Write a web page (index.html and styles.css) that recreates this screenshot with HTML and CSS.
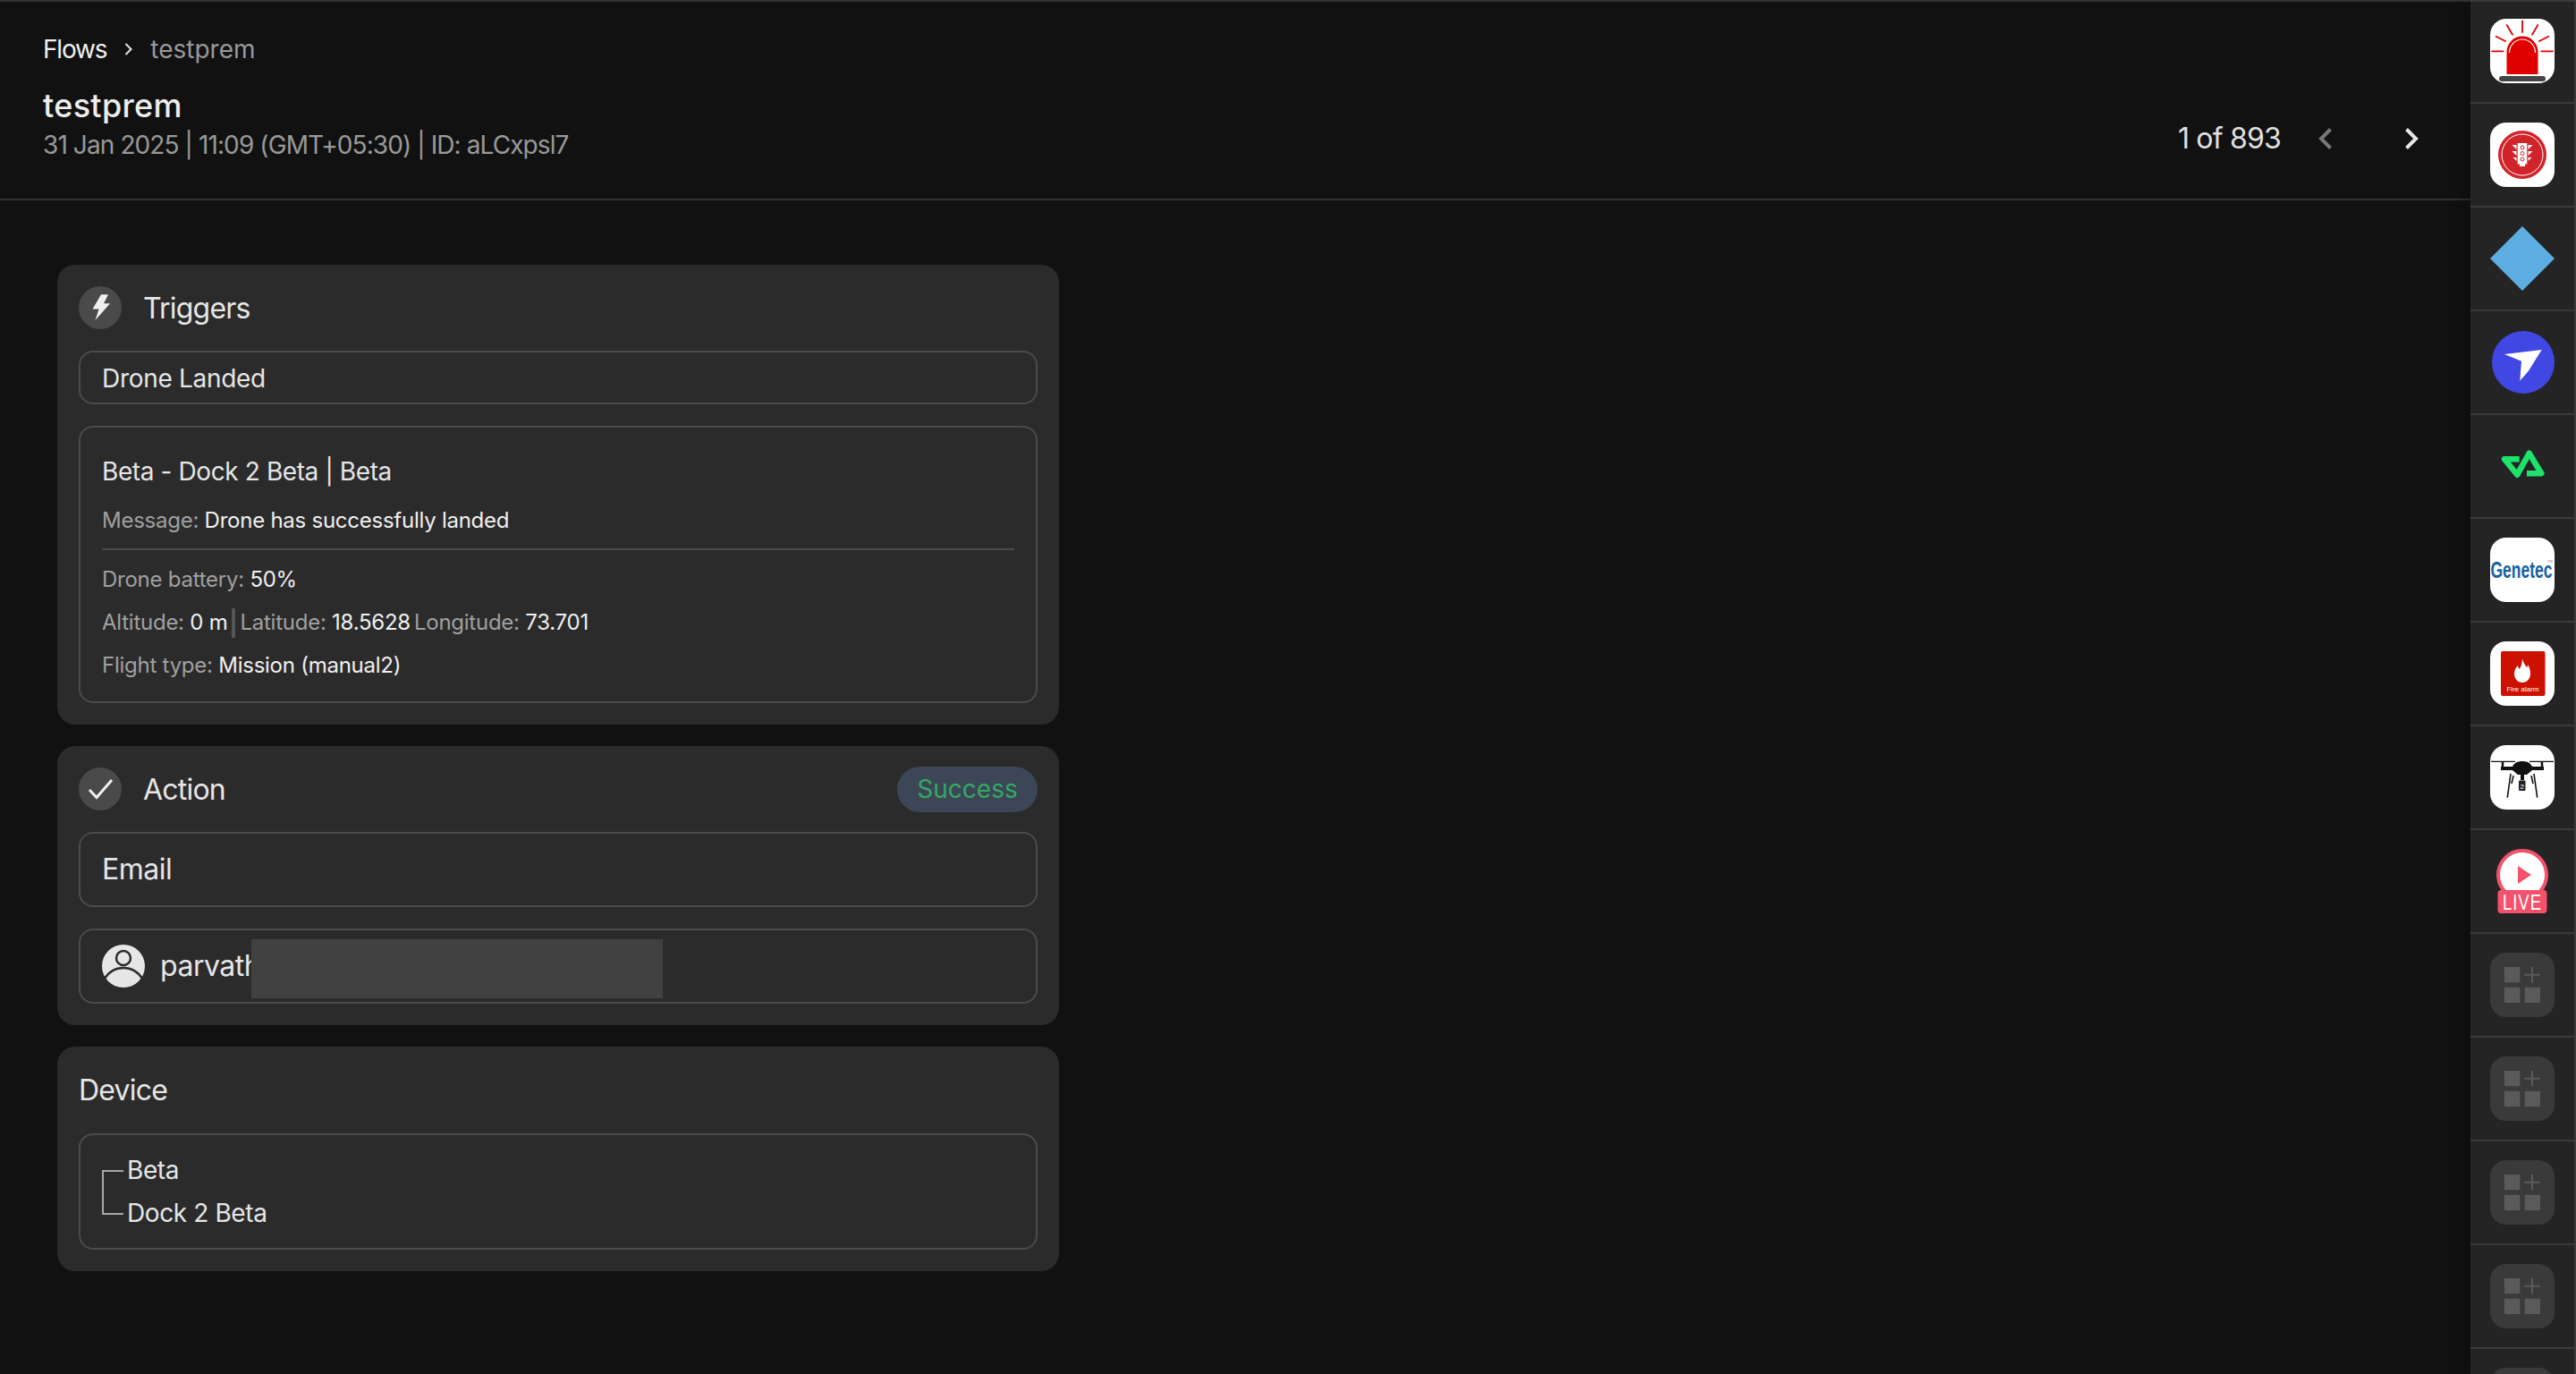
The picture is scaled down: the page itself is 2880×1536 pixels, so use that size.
FILE: index.html
```html
<!DOCTYPE html>
<html lang="en">
<head>
  <meta charset="UTF-8">
  <title>testprem</title>
  <link rel="stylesheet" href="styles.css">
</head>
<body>
  <div class="app">
    <main class="main">
      <header class="topbar">
        <nav class="crumbs">
          <span class="crumb-link">Flows</span>
          <svg class="crumb-sep" viewBox="0 0 10 16"><path d="M1.5 2l6 6-6 6"/></svg>
          <span class="crumb-here">testprem</span>
        </nav>
        <div class="title-row">
          <div>
            <h1 class="title">testprem</h1>
            <p class="subtitle">31 Jan 2025 | 11:09 (GMT+05:30) | ID: aLCxpsl7</p>
          </div>
          <div class="pager">
            <span class="pager-count">1 of 893</span>
            <svg class="pager-btn off" viewBox="0 0 16 26"><path d="M13.5 2.5L3 13l10.500 10.500"/></svg>
            <svg class="pager-btn" viewBox="0 0 16 26"><path d="M2.500 2.500L13 13 2.500 23.500"/></svg>
          </div>
        </div>
      </header>

      <div class="content">
        <section class="card">
          <div class="card-head">
            <span class="round-icon">
              <svg viewBox="0 0 48 48"><path class="fill" d="M25 9.300h8L28 19.300h7L18.500 38l4-12.500h-7z"/></svg>
            </span>
            <h2>Triggers</h2>
          </div>
          <div class="box box-small">Drone Landed</div>
          <div class="box box-detail">
            <div class="detail-title">Beta - Dock 2 Beta | Beta</div>
            <div class="row"><span class="key">Message:</span> Drone has successfully landed</div>
            <hr class="rule">
            <div class="row"><span class="key">Drone battery:</span> 50%</div>
            <div class="row pos">
              <span class="pos-item"><span class="key">Altitude:</span> 0 m</span>
              <i class="pipe"></i>
              <span class="pos-item"><span class="key">Latitude:</span> 18.5628</span>
              <span class="pos-item pos-last"><span class="key">Longitude:</span> 73.701</span>
            </div>
            <div class="row"><span class="key">Flight type:</span> Mission (manual2)</div>
          </div>
        </section>

        <section class="card">
          <div class="card-head">
            <span class="round-icon">
              <svg viewBox="0 0 48 48"><path class="line" d="M12 25l8 8.500L37 14"/></svg>
            </span>
            <h2>Action</h2>
            <span class="badge">Success</span>
          </div>
          <div class="box box-big">Email</div>
          <div class="box box-big person">
            <svg class="avatar" viewBox="0 0 48 48">
              <circle cx="24" cy="24" r="24" fill="#e6e6e6"/>
              <circle cx="24" cy="15" r="8" fill="none" stroke="#2b2b2b" stroke-width="2.500"/>
              <path d="M3 38c5-8 12-12 21-12s16 4 21 12" fill="none" stroke="#2b2b2b" stroke-width="2.500"/>
            </svg>
            <span>parvathi</span>
            <div class="redact"></div>
          </div>
        </section>

        <section class="card">
          <h2 class="device-head">Device</h2>
          <div class="box tree">
            <div class="tree-line"></div>
            <div>
              <div class="tree-row">Beta</div>
              <div class="tree-row">Dock 2 Beta</div>
            </div>
          </div>
        </section>
      </div>
    </main>

    <aside class="side">
      <a class="side-item">
        <svg class="app-icon" viewBox="0 0 72 72">
          <rect width="72" height="72" rx="18" fill="#fff"/>
          <path d="M18.500 62V37a17.500 17.500 0 0 1 35 0v25z" fill="#e10000"/>
          <path d="M21.500 38a14.500 15 0 0 1 29 0" fill="none" stroke="#fff" stroke-width="1.200"/>
          <rect x="10" y="64" width="52" height="6" rx="3" fill="#444"/>
          <path d="M36 2.500V15M18.700 7L25 17.700M53.300 7L47 17.700M6.700 19.700L17 25M65.300 19.700L55 25M2 36.300h12.700M70 36.300H57.300" stroke="#e10000" stroke-width="1.800" stroke-linecap="round"/>
        </svg>
      </a>
      <a class="side-item">
        <svg class="app-icon" viewBox="0 0 72 72">
          <rect width="72" height="72" rx="18" fill="#fff"/>
          <circle cx="36" cy="36" r="27" fill="#d1232a"/>
          <circle cx="36" cy="36" r="23" fill="none" stroke="#fff" stroke-width="1"/>
          <path d="M30.700 23h10.600v23.500H39V49h-6v-2.500h-2.300z" fill="#fff"/>
          <path d="M29.500 25h-5l5 5zM29.500 32h-5l5 5zM29.500 39h-4l4 4zM42.500 25h5l-5 5zM42.500 32h5l-5 5zM42.500 39h4l-4 4z" fill="#fff"/>
          <g fill="none" stroke="#d1232a" stroke-width="1">
            <circle cx="36" cy="28" r="2"/><circle cx="36" cy="34.500" r="2"/><circle cx="36" cy="41" r="2"/>
          </g>
        </svg>
      </a>
      <a class="side-item">
        <svg class="app-icon" viewBox="0 0 72 72"><path d="M36 0l36 36-36 36L0 36z" fill="#5dade2"/></svg>
      </a>
      <a class="side-item">
        <svg class="app-icon" viewBox="0 0 72 72">
          <circle cx="37" cy="36" r="35" fill="#4147e2"/>
          <path d="M16 27l41.700-5-15 24-9.400 10.700L35 34.700z" fill="#fff"/>
        </svg>
      </a>
      <a class="side-item">
        <svg class="app-icon" viewBox="0 0 72 72">
          <path d="M32.700 28.300H16L30.300 45.700 43.700 21.700 57.300 44.300H41" fill="none" stroke="#1ee36b" stroke-width="6.500" stroke-linejoin="round"/>
        </svg>
      </a>
      <a class="side-item">
        <svg class="app-icon" viewBox="0 0 72 72">
          <rect width="72" height="72" rx="18" fill="#fff"/>
          <text class="genetec" transform="translate(35 45) scale(1 1.45)" text-anchor="middle">Genetec</text>
          <text class="genetec-tm" x="64" y="28">TM</text>
        </svg>
      </a>
      <a class="side-item">
        <svg class="app-icon" viewBox="0 0 72 72">
          <rect width="72" height="72" rx="18" fill="#fff"/>
          <rect x="12" y="11" width="49.500" height="50" rx="2" fill="#cc1100"/>
          <path d="M36 19c1 5 3 7 5 10 1-1 1-2 1-3 2 3 3 6 3 10 0 6-4 10-9 10s-9-4-9-10c0-4 2-7 4-9 0 2 1 3 2 4 2-4 3-8 3-12z" fill="#fff"/>
          <text class="fire-text" x="36.500" y="56" text-anchor="middle">Fire alarm</text>
        </svg>
      </a>
      <a class="side-item">
        <svg class="app-icon" viewBox="0 0 72 72">
          <rect width="72" height="72" rx="18" fill="#fff"/>
          <path d="M1 18.300h27M44 18.300h27" stroke="#111" stroke-width="1.300"/>
          <path d="M14 18v6M58 18v6" stroke="#111" stroke-width="2.500"/>
          <path d="M12 24h13c2-4 5-6 11-6s9 2 11 6h13v4H47l-6 5H31l-6-5H12z" fill="#111"/>
          <path d="M23 32l-3.700 26.700M26 34l-2 9M49 32l3.700 26.700M46 34l2 9" stroke="#111" stroke-width="1.600" fill="none"/>
          <rect x="32" y="39.500" width="7.500" height="11.500" rx="1" fill="#222"/>
          <path d="M34 33h4v6h-4z" fill="#111"/>
          <text class="drone-text" x="35.700" y="48.500" text-anchor="middle">2</text>
        </svg>
      </a>
      <a class="side-item">
        <svg class="app-icon" viewBox="0 0 72 72">
          <circle cx="36" cy="29" r="27" fill="#fff" stroke="#f4516c" stroke-width="4"/>
          <path d="M31 19l15 10-15 10z" fill="#f4516c"/>
          <rect x="8.500" y="46" width="55" height="26" rx="4" fill="#f4516c"/>
          <text class="live-text" transform="translate(36 68) scale(1 1.3)" text-anchor="middle">LIVE</text>
        </svg>
      </a>
      <a class="side-item"><svg class="app-icon"><use href="#slot"/></svg></a>
      <a class="side-item"><svg class="app-icon"><use href="#slot"/></svg></a>
      <a class="side-item"><svg class="app-icon"><use href="#slot"/></svg></a>
      <a class="side-item"><svg class="app-icon"><use href="#slot"/></svg></a>
      <a class="side-item"><svg class="app-icon"><use href="#slot"/></svg></a>
    </aside>
  </div>

  <svg class="defs" width="0" height="0">
    <symbol id="slot" viewBox="0 0 72 72">
      <rect width="72" height="72" rx="18" fill="#3a3a3a"/>
      <path d="M16 16h17.300v17.300H16zM16 38.700h17.300V56H16zM38.700 38.700H56V56H38.700z" fill="#5a5a5a"/>
      <path d="M38.300 24.700h17.400M47 16v17.400" stroke="#5a5a5a" stroke-width="2"/>
    </symbol>
  </svg>
</body>
</html>
```

FILE: styles.css
```css
* { box-sizing: border-box; margin: 0; padding: 0; }
html, body { height: 100%; overflow: hidden; }
body {
  font-family: 'Inter', sans-serif;
  background: #111111;
  color: #e6e6e6;
}
.defs { position: absolute; }
.app {
  display: flex;
  height: 100vh;
}
.main {
  flex: 1;
  min-width: 0;
  border-top: 2px solid #333333;
}

/* top bar */
.topbar {
  height: 222px;
  padding: 33px 58px 0 48px;
  border-bottom: 2px solid #333333;
}
.crumbs {
  display: flex;
  align-items: center;
  height: 40px;
  font-size: 28px;
}
.crumb-link { color: #f0f0f0; letter-spacing: -1.2px; }
.crumb-sep {
  width: 10px;
  height: 16px;
  margin: 0 19px 0 20px;
  fill: none;
  stroke: #e6e6e6;
  stroke-width: 2;
}
.crumb-here { color: #999999; }
.title-row {
  display: flex;
  justify-content: space-between;
  align-items: center;
  margin-top: 20px;
}
.title {
  font-size: 36px;
  font-weight: 500;
  line-height: 46px;
  letter-spacing: 0.3px;
  color: #ededed;
}
.subtitle {
  font-size: 28px;
  line-height: 40px;
  margin-top: 1px;
  letter-spacing: -0.9px;
  color: #999999;
}
.pager {
  display: flex;
  align-items: center;
  margin-top: 32px;
}
.pager-count {
  font-size: 32px;
  letter-spacing: -0.8px;
  color: #e0e0e0;
  margin-right: 42px;
}
.pager-btn {
  width: 16px;
  height: 26px;
  fill: none;
  stroke: #e6e6e6;
  stroke-width: 4;
}
.pager-btn.off {
  stroke: #777777;
  margin-right: 80px;
}

/* cards */
.content {
  display: flex;
  flex-direction: column;
  gap: 24px;
  width: 1120px;
  margin: 72px 0 0 64px;
}
.card {
  background: #2b2b2b;
  border-radius: 20px;
  padding: 24px;
  display: flex;
  flex-direction: column;
  gap: 24px;
}
.card-head {
  display: flex;
  align-items: center;
  height: 48px;
  gap: 24px;
}
.card h2 {
  font-size: 32px;
  font-weight: 400;
  letter-spacing: -0.8px;
  color: #e6e6e6;
}
.round-icon {
  width: 48px;
  height: 48px;
  border-radius: 50%;
  background: #4a4a4a;
  flex: none;
}
.round-icon svg { display: block; width: 48px; height: 48px; }
.round-icon .fill { fill: #f0f0f0; }
.round-icon .line { fill: none; stroke: #f0f0f0; stroke-width: 3; }
.badge {
  margin-left: auto;
  width: 157px;
  height: 51px;
  line-height: 51px;
  text-align: center;
  border-radius: 26px;
  background: #3c4656;
  color: #34a862;
  font-size: 28px;
}
.box {
  border: 2px solid #4b4b4b;
  border-radius: 16px;
  padding: 0 24px;
}
.box-small {
  height: 60px;
  line-height: 58px;
  font-size: 28px;
  letter-spacing: -0.3px;
}
.box-big {
  height: 84px;
  line-height: 80px;
  font-size: 32px;
  letter-spacing: -0.5px;
}
.box-detail {
  height: 310px;
  padding-top: 29px;
}
.detail-title {
  font-size: 28px;
  line-height: 40px;
  letter-spacing: -0.4px;
  margin-bottom: 11px;
}
.row {
  font-size: 24px;
  line-height: 48px;
  letter-spacing: -0.25px;
  color: #f0f0f0;
}
.row .key { color: #a0a0a0; }
.pos {
  display: flex;
  align-items: center;
}
.pos-item { white-space: pre-wrap; }
.pos-last { margin-left: 4px; }
.pipe {
  width: 4px;
  height: 33px;
  background: #555555;
  margin: 0 5px;
}
.rule {
  border: 0;
  height: 2px;
  background: #4b4b4b;
  margin: 7px 0 9px;
}
.person {
  position: relative;
  display: flex;
  align-items: center;
  gap: 17px;
  overflow: hidden;
}
.avatar { width: 48px; height: 48px; flex: none; }
.redact {
  position: absolute;
  left: 191px;
  top: 10px;
  width: 460px;
  height: 66px;
  background: #414141;
}
.device-head { line-height: 49px; }
.tree {
  height: 130px;
  display: flex;
  padding-top: 15px;
  font-size: 28px;
  letter-spacing: -0.4px;
}
.tree-line {
  width: 24px;
  height: 50px;
  margin: 24px 4px 0 0;
  border: 2px solid #a8a8a8;
  border-right: 0;
}
.tree-row { line-height: 48px; }

/* right rail */
.side {
  width: 118px;
  flex: none;
  background: #242424;
  border-right: 2px solid #3a3a3a;
  box-shadow: -8px 0 16px rgba(0,0,0,0.25);
  overflow: hidden;
}
.side-item {
  display: flex;
  justify-content: center;
  height: 116px;
  padding-top: 21px;
  border-bottom: 2px solid #3a3a3a;
}
.side-item:first-child {
  padding-top: 19px;
  border-top: 2px solid #3a3a3a;
}
.app-icon { width: 72px; height: 72px; flex: none; overflow: visible; }
.genetec {
  font-family: 'Liberation Sans', sans-serif;
  font-size: 17.500px;
  font-weight: 700;
  fill: #17629e;
}
.genetec-tm {
  font-family: 'Liberation Sans', sans-serif;
  font-size: 4px;
  fill: #777;
}
.fire-text {
  font-family: 'Liberation Sans', sans-serif;
  font-size: 8px;
  fill: #fff;
}
.drone-text {
  font-family: 'Liberation Sans', sans-serif;
  font-size: 8px;
  fill: #fff;
}
.live-text {
  font-family: 'Liberation Sans', sans-serif;
  font-size: 18.500px;
  letter-spacing: 1px;
  fill: #fff;
}
```
